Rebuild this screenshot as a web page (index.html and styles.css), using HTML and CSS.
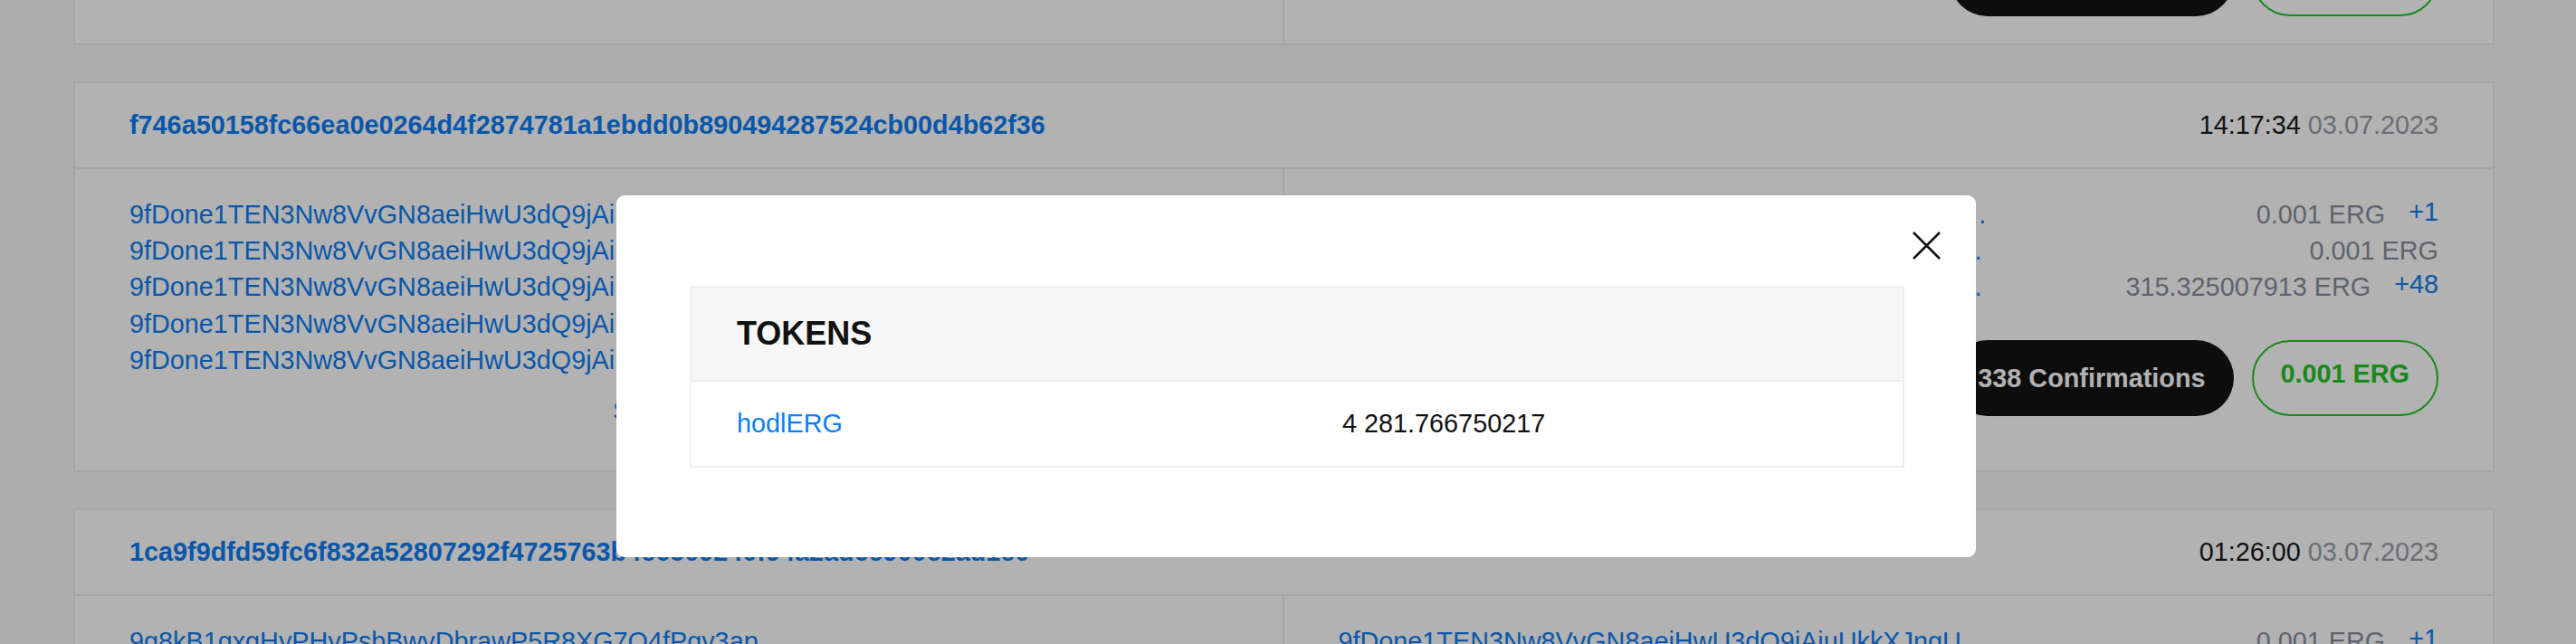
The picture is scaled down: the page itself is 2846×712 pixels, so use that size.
FILE: index.html
```html
<!DOCTYPE html>
<html lang="en">
<head>
  <meta charset="UTF-8">
  <title>Transactions</title>
  <meta name="viewport" content="width=device-width, initial-scale=1">
  <link rel="stylesheet" href="styles.css">
</head>
<body>
  <main class="tx-list">
    <!-- транзакция выше (прокручена) -->
    <section class="tx-card">
      <header class="tx-head">
        <a class="tx-id" href="#">5b1c0e0a7f9d2c4e8a63b1f07d95e2c4a8b6d3f1e0c7a9b5d2f4e6a8c0b1d3e5</a>
        <span class="tx-time">14:21:08 <span class="tx-date">03.07.2023</span></span>
      </header>
      <div class="tx-body">
        <div class="tx-inputs">
          <a class="addr" href="#">9fDone1TEN3Nw8VvGN8aeiHwU3dQ9jAiuUkkXJngU…</a>
        </div>
        <div class="tx-outputs">
          <div class="out-row">
            <a class="addr" href="#">9fDone1TEN3Nw8VvGN8aeiHwU3dQ9jAiuUkkXJngU…</a>
            <span class="amount">0.001 ERG</span>
          </div>
          <div class="out-row">
            <a class="addr" href="#">9fDone1TEN3Nw8VvGN8aeiHwU3dQ9jAiuUkkXJngo…</a>
            <span class="amount">0.001 ERG</span>
          </div>
          <div class="tx-status">
            <span class="confirm">337 Confirmations</span>
            <span class="total">0.001 ERG</span>
          </div>
        </div>
      </div>
    </section>

    <section class="tx-card">
      <header class="tx-head">
        <a class="tx-id" href="#">f746a50158fc66ea0e0264d4f2874781a1ebdd0b890494287524cb00d4b62f36</a>
        <span class="tx-time">14:17:34 <span class="tx-date">03.07.2023</span></span>
      </header>
      <div class="tx-body">
        <div class="tx-inputs">
          <a class="addr" href="#">9fDone1TEN3Nw8VvGN8aeiHwU3dQ9jAiuUkkXJngU…</a>
          <a class="addr" href="#">9fDone1TEN3Nw8VvGN8aeiHwU3dQ9jAiuUkkXJngU…</a>
          <a class="addr" href="#">9fDone1TEN3Nw8VvGN8aeiHwU3dQ9jAiuUkkXJngU…</a>
          <a class="addr" href="#">9fDone1TEN3Nw8VvGN8aeiHwU3dQ9jAiuUkkXJngU…</a>
          <a class="addr" href="#">9fDone1TEN3Nw8VvGN8aeiHwU3dQ9jAiuUkkXJngU…</a>
          <a class="show-more" href="#">Show more</a>
        </div>
        <div class="tx-outputs">
          <div class="out-row">
            <a class="addr" href="#">9fDone1TEN3Nw8VvGN8aeiHwU3dQ9jAiuUkkXJngU…</a>
            <span class="amount">0.001 ERG</span>
            <a class="token-count" href="#">+1</a>
          </div>
          <div class="out-row">
            <a class="addr" href="#">9fDone1TEN3Nw8VvGN8aeiHwU3dQ9jAiuUkkXJngo…</a>
            <span class="amount">0.001 ERG</span>
          </div>
          <div class="out-row">
            <a class="addr" href="#">9fDone1TEN3Nw8VvGN8aeiHwU3dQ9jAiuUkkXJnga…</a>
            <span class="amount">315.325007913 ERG</span>
            <a class="token-count" href="#">+48</a>
          </div>
          <div class="tx-status">
            <span class="confirm">338 Confirmations</span>
            <span class="total">0.001 ERG</span>
          </div>
        </div>
      </div>
    </section>

    <section class="tx-card">
      <header class="tx-head">
        <a class="tx-id" href="#">1ca9f9dfd59fc6f832a52807292f4725763b4c6509240f94a2ad6c900e2ad1e0</a>
        <span class="tx-time">01:26:00 <span class="tx-date">03.07.2023</span></span>
      </header>
      <div class="tx-body">
        <div class="tx-inputs">
          <a class="addr" href="#">9g8kB1gxgHyPHyPsbBwyDbrawP5R8XG7Q4fPqy3ap…</a>
        </div>
        <div class="tx-outputs">
          <div class="out-row">
            <a class="addr" href="#">9fDone1TEN3Nw8VvGN8aeiHwU3dQ9jAiuUkkXJngU…</a>
            <span class="amount">0.001 ERG</span>
            <a class="token-count" href="#">+1</a>
          </div>
        </div>
      </div>
    </section>
  </main>

  <!-- модальное окно токенов -->
  <div class="overlay"></div>
  <div class="modal">
    <button class="modal-close" type="button" aria-label="Close">
      <svg width="31" height="31" viewBox="0 0 31 31"><path d="M1 1L30 30M30 1L1 30" stroke="#111" stroke-width="2.6" fill="none"/></svg>
    </button>
    <div class="tokens">
      <div class="tokens-head">TOKENS</div>
      <div class="tokens-row">
        <a class="token-name" href="#">hodlERG</a>
        <span class="token-amount">4 281.766750217</span>
      </div>
    </div>
  </div>
</body>
</html>
```

FILE: styles.css
```css
/* базовые настройки */
* {
  box-sizing: border-box;
  margin: 0;
  padding: 0;
}
body {
  font-family: "Liberation Sans", Arial, sans-serif;
  font-size: 28.8px;
  line-height: 1.4;
  color: #1a1a1a;
  background: #f8f8f8;
  overflow: hidden;
}
a {
  color: #0d7df4;
  text-decoration: none;
}

/* список транзакций */
.tx-list {
  padding: 0 90px 0 81px;
  margin-top: -311px;
}
.tx-card {
  background: #fff;
  border: 2px solid #eeeeee;
  margin-bottom: 40px;
}
.tx-head {
  display: flex;
  justify-content: space-between;
  padding: 26px 60px;
  border-bottom: 2px solid #eeeeee;
}
.tx-id {
  font-weight: bold;
}
.tx-date {
  color: #9a9ea9;
}
.tx-body {
  display: grid;
  grid-template-columns: 1fr 1fr;
}
.tx-inputs,
.tx-outputs {
  padding: 30px 60px;
}
.tx-inputs {
  border-right: 2px solid #eeeeee;
}
.addr {
  display: block;
  white-space: nowrap;
}
.show-more {
  display: block;
  text-align: center;
  margin: 16px 0;
}
.out-row {
  display: flex;
  align-items: baseline;
}
.out-row .addr {
  margin-right: auto;
}
.amount {
  color: #888e9c;
}
.token-count {
  margin-left: 26px;
  position: relative;
  top: -3px;
}

/* подтверждения и сумма */
.tx-status {
  display: flex;
  justify-content: flex-end;
  gap: 20px;
  margin-top: 38px;
  font-weight: bold;
}
.confirm {
  background: #141414;
  color: #fff;
  border-radius: 42px;
  padding: 22px 31px;
}
.total {
  color: #26c426;
  border: 2px solid #26c426;
  border-radius: 42px;
  padding: 15px 30px 25px;
}

/* модальное окно */
.overlay {
  position: fixed;
  inset: 0;
  background: rgba(0, 0, 0, 0.3);
}
.modal {
  position: fixed;
  top: 216px;
  left: 681px;
  width: 1502px;
  padding: 100px 79px 99px 81px;
  background: #fff;
  border-radius: 9px;
}
.modal-close {
  position: absolute;
  top: 40px;
  right: 39px;
  width: 31px;
  height: 31px;
  border: none;
  background: none;
  cursor: pointer;
}
.modal-close svg {
  display: block;
}
.tokens {
  border: 2px solid #eeeeee;
}
.tokens-head {
  background: #f7f7f7;
  border-bottom: 2px solid #eeeeee;
  padding: 26px 50px;
  font-size: 36px;
  font-weight: bold;
  color: #111;
}
.tokens-row {
  display: grid;
  grid-template-columns: 1fr 1fr;
  padding: 26px 0;
}
.tokens-row > * {
  padding-left: 50px;
}
.token-amount {
  color: #111;
}
```
